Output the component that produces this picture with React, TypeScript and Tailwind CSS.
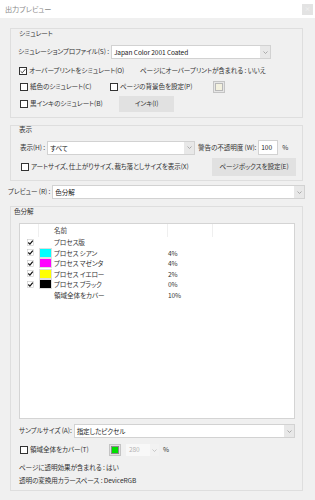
import React from 'react';

const font = "font-['Noto_Sans_CJK_JP','Liberation_Sans',sans-serif] [font-feature-settings:'palt']";

const Check = ({ checked = false }: { checked?: boolean }) => (
  <span className="flex h-[8px] w-[8px] shrink-0 items-center justify-center border border-[#333] bg-white">
    {checked && (
      <svg width="6" height="6" viewBox="0 0 6 6">
        <path d="M0.6 3.2 L2.3 4.8 L5.4 1.1" fill="none" stroke="#333" strokeWidth="0.9" />
      </svg>
    )}
  </span>
);

const Select = ({ text, className = '' }: { text: string; className?: string }) => (
  <div className={`flex h-[14px] min-w-0 items-center border border-[#d2d2d2] bg-white ${className}`}>
    <span className="flex-1 pl-[2px] leading-[12px] text-[#222]">{text}</span>
    <span className="flex h-full w-[10px] items-center justify-center bg-[#e8e8e8]">
      <svg width="5" height="3" viewBox="0 0 5 3">
        <path d="M0.5 0.5 L2.5 2.5 L4.5 0.5" fill="none" stroke="#999" strokeWidth="0.8" />
      </svg>
    </span>
  </div>
);

const ListCheck = () => (
  <svg width="7" height="7" viewBox="0 0 7 7">
    <rect x="0.5" y="0.5" width="6" height="6" fill="#fff" stroke="#c8c8c8" strokeWidth="0.6" />
    <path d="M1.3 3.5 L2.9 5.1 L5.8 1.6" fill="none" stroke="#111" strokeWidth="1.2" />
  </svg>
);

const rows = [
  { name: 'プロセス版', check: true, color: '', pct: '' },
  { name: 'プロセス シアン', check: true, color: '#00ffff', pct: '4%' },
  { name: 'プロセス マゼンタ', check: true, color: '#ff00ff', pct: '4%' },
  { name: 'プロセス イエロー', check: true, color: '#ffff00', pct: '2%' },
  { name: 'プロセス ブラック', check: true, color: '#000000', pct: '0%' },
  { name: '領域全体をカバー', check: false, color: '', pct: '10%' },
];

export default function App() {
  return (
    <div className={`relative h-[500px] w-[315px] overflow-hidden whitespace-nowrap bg-[#f0f0f0] text-[6.6px] tracking-[-0.1px] text-[#333] ${font}`}>
      {/* title bar */}
      <div className="flex h-[18px] items-center justify-between bg-white pl-[5px] pr-[2px]">
        <span className="text-[7.2px] text-[#8a8a8a]">出力プレビュー</span>
        <span className="flex h-[11px] w-[11px] items-center justify-center bg-[#e3e3e3] text-[6px] leading-none text-[#f4f4f4]">×</span>
      </div>

      {/* シミュレート */}
      <div className="ml-[10px] mt-[10px] w-[293px] border border-[#dedede] pb-[5px] pl-[6px]">
        <div className="flex h-[10px] items-center pl-[2px]">シミュレート</div>
        <div className="mt-[6px] flex w-[254px] items-center gap-[2px]">
          <span className="shrink-0 pl-[1px]">シミュレーションプロファイル(S) :</span>
          <Select text="Japan Color 2001 Coated" className="flex-1" />
        </div>
        <div className="mt-[6px] flex h-[12px] items-center">
          <div className="flex w-[123px] shrink-0 items-center gap-[2px] pl-[2px]">
            <Check checked />
            <span>オーバープリントをシミュレート(O)</span>
          </div>
          <span>ページにオーバープリントが含まれる : いいえ</span>
        </div>
        <div className="mt-[4px] flex h-[12px] items-center">
          <div className="flex w-[93px] shrink-0 items-center gap-[2px] pl-[3px]">
            <Check />
            <span>紙色のシミュレート(C)</span>
          </div>
          <div className="flex w-[103px] shrink-0 items-center gap-[2px]">
            <Check />
            <span>ページの背景色を設定(P)</span>
          </div>
          <span className="flex h-[12px] w-[12px] items-center justify-center border border-[#c4c4c4] bg-[#e6e6e6]">
            <span className="h-[8px] w-[8px] border border-[#b8b8b8] bg-[#f3f1df]" />
          </span>
        </div>
        <div className="mt-[3px] flex h-[16px] items-center">
          <div className="flex w-[102px] shrink-0 items-center gap-[2px] pl-[3px]">
            <Check />
            <span>黒インキのシミュレート(B)</span>
          </div>
          <button className="flex h-[16px] w-[55px] items-center justify-center bg-[#e1e1e1] text-[#333]">インキ(I)</button>
        </div>
      </div>

      {/* 表示 */}
      <div className="ml-[10px] mt-[7px] w-[293px] border border-[#dedede] pb-[4px] pl-[8px]">
        <div className="flex h-[8px] items-center">表示</div>
        <div className="mt-[6px] flex h-[15px] items-center">
          <div className="flex w-[176px] shrink-0 items-center gap-[2px]">
            <span className="shrink-0 pl-[1px]">表示(H) :</span>
            <Select text="すべて" className="flex-1" />
          </div>
          <span className="ml-[3px]">警告の不透明度 (W):</span>
          <span className="ml-[2px] flex h-[15px] w-[20px] shrink-0 items-center border border-[#d2d2d2] bg-white pl-[2px] text-[#222]">100</span>
          <span className="ml-[4px]">%</span>
        </div>
        <div className="mt-[3px] flex h-[18px] items-center">
          <div className="flex w-[193px] shrink-0 items-center gap-[2px] pl-[2px]">
            <Check />
            <span>アートサイズ、仕上がりサイズ、裁ち落としサイズを表示(X)</span>
          </div>
          <button className="flex h-[18px] w-[84px] shrink-0 items-center justify-center bg-[#e1e1e1] text-[#333]">ページボックスを設定(E)</button>
        </div>
      </div>

      {/* プレビュー */}
      <div className="ml-[8px] mt-[4px] flex w-[297px] items-center gap-[2px]">
        <span className="shrink-0">プレビュー (R) :</span>
        <Select text="色分解" className="flex-1" />
      </div>

      {/* 色分解 */}
      <div className="ml-[10px] mt-[7px] w-[293px] border border-[#dedede] pb-[4px] pl-[8px] pr-[7px]">
        <div className="-ml-[5px] flex h-[10px] items-center">色分解</div>
        <div className="mt-[6px] h-[196px] border border-[#d4d4d4] bg-white">
          <div className="flex h-[13px] items-center">
            <span className="h-full w-[19px] border-r border-[#efefef]" />
            <span className="h-full w-[129px] border-r border-[#efefef] pl-[15px] leading-[13px] text-[#444]">名前</span>
            <span className="h-full w-[45px] border-r border-[#efefef]" />
          </div>
          {rows.map(({ name, check, color, pct }) => (
            <div key={name} className="flex h-[10.5px] items-center">
              <span className="flex w-[19px] justify-center pl-[1px]">{check && <ListCheck />}</span>
              <span className="flex w-[15px] items-center">
                {color && <span className="h-[10px] w-[13px] border border-[#ddd]" style={{ backgroundColor: color }} />}
              </span>
              <span className="w-[114px] leading-[10px]">{name}</span>
              <span className="leading-[10px]">{pct}</span>
            </div>
          ))}
        </div>
        <div className="mt-[5px] flex items-center gap-[2px]">
          <span className="shrink-0">サンプルサイズ (A):</span>
          <Select text="指定したピクセル" className="flex-1" />
        </div>
        <div className="mt-[6px] flex h-[12px] items-center">
          <div className="flex w-[90px] shrink-0 items-center gap-[2px] pl-[1px]">
            <Check />
            <span>領域全体をカバー(T)</span>
          </div>
          <span className="flex h-[12px] w-[12px] shrink-0 items-center justify-center border border-[#c4c4c4] bg-[#e2e2e2]">
            <span className="h-[8px] w-[8px] border border-[#8a8a8a] bg-[#00e000]" />
          </span>
          <span className="ml-[5px] flex h-[12px] w-[33px] shrink-0 items-center bg-[#f8f8f8] pl-[3px] text-[#b4b4b4]">
            <span className="flex-1">280</span>
            <span className="flex h-full w-[9px] items-center justify-center bg-[#f2f2f2]">
              <svg width="5" height="3" viewBox="0 0 5 3">
                <path d="M0.5 0.5 L2.5 2.5 L4.5 0.5" fill="none" stroke="#bbb" strokeWidth="0.8" />
              </svg>
            </span>
          </span>
          <span className="ml-[4px]">%</span>
        </div>
        <div className="mt-[7px] flex h-[10px] items-center">ページに透明効果が含まれる : はい</div>
        <div className="mt-[3px] flex h-[10px] items-center">透明の変換用カラースペース : DeviceRGB</div>
      </div>
    </div>
  );
}
